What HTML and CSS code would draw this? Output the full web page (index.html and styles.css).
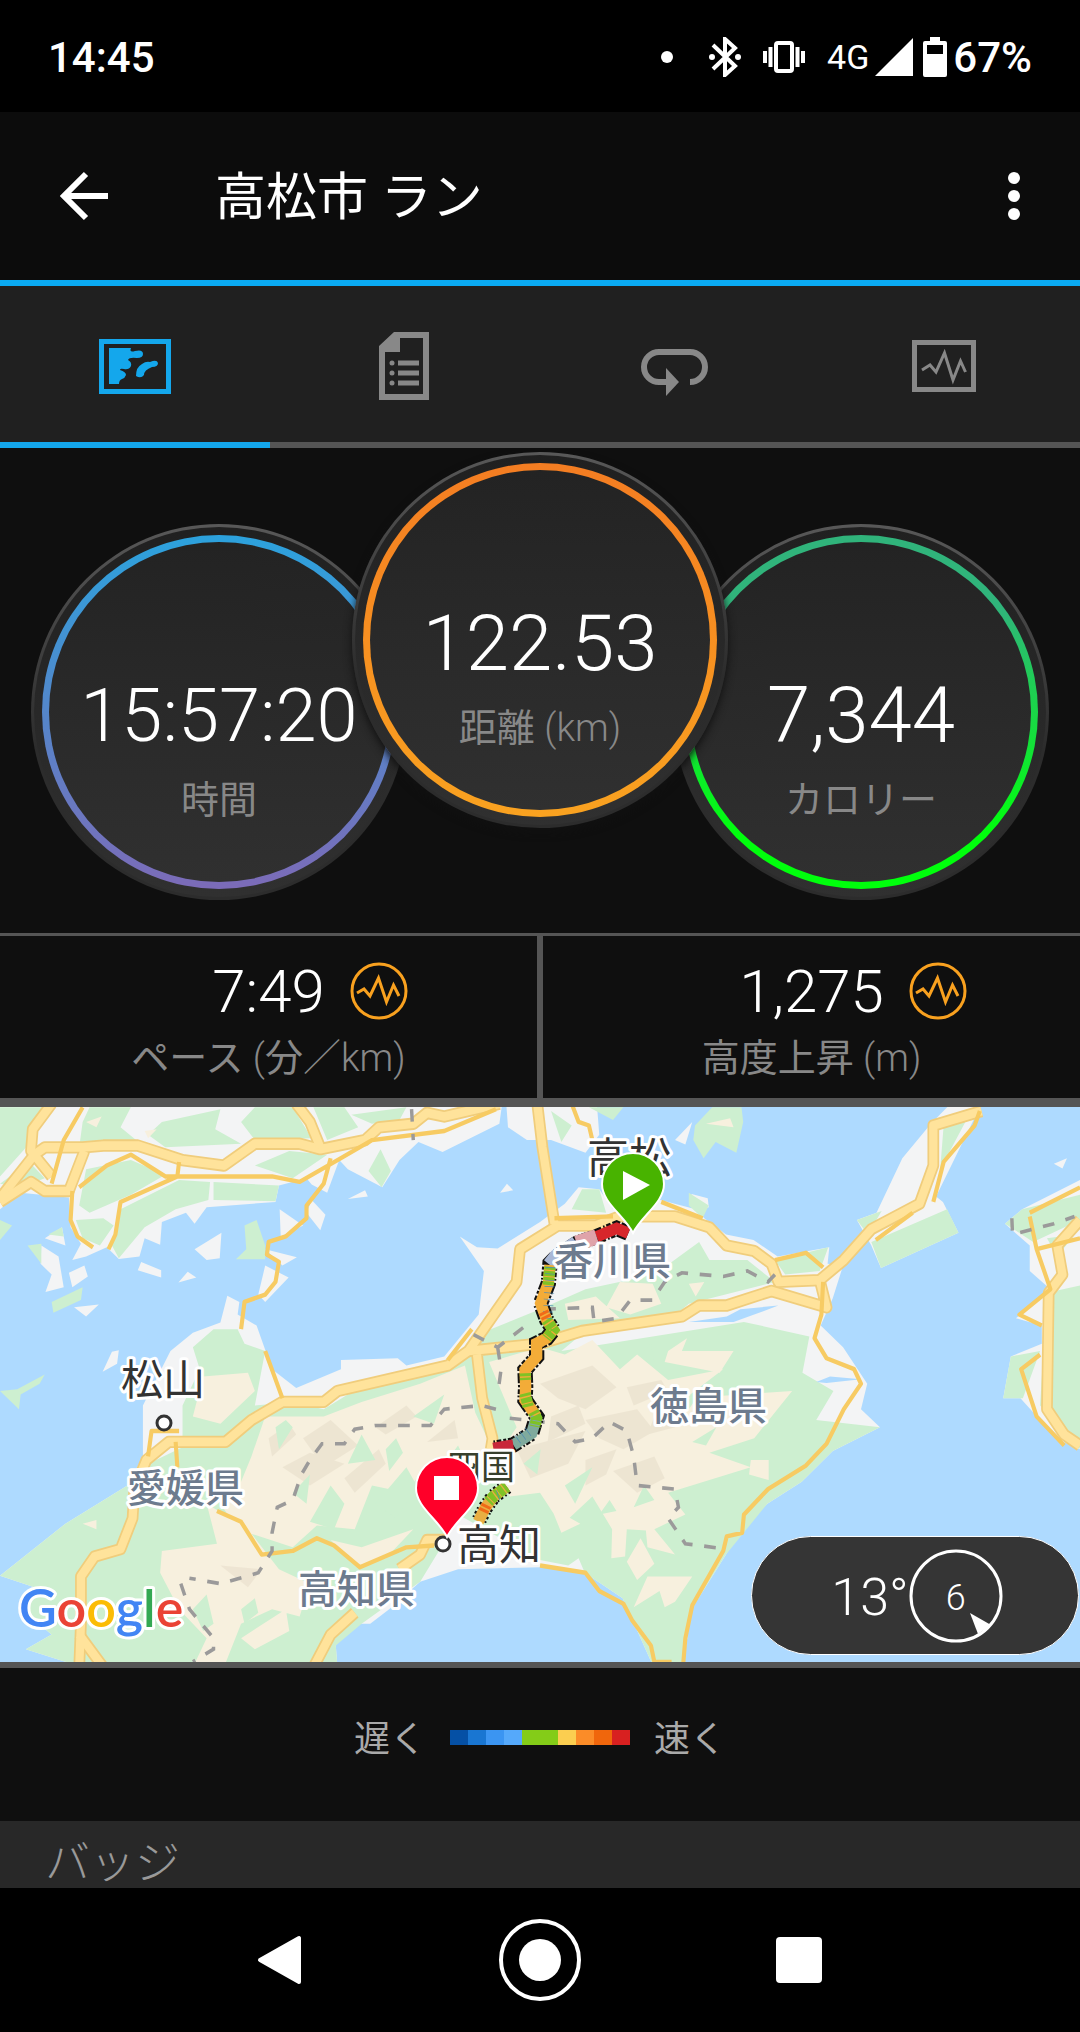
FILE: index.html
```html
<!DOCTYPE html>
<html lang="ja">

<head>
  <meta charset="UTF-8" />
  <meta name="viewport" content="width=device-width, initial-scale=1" />
  <title>高松市 ラン</title>
  <link rel="stylesheet" href="styles.css">
</head>

<body>
  <div class="status-bar">
    <span class="clock">14:45</span>
    <div class="status-icons">
      <svg width="12" height="12" viewBox="0 0 12 12"><circle cx="6" cy="6" r="6" fill="#fff"/></svg>
      <svg class="bluetooth" width="32" height="40" viewBox="0 0 32 40">
        <path d="M4 8l22 21-10 9V2l10 9L4 32" fill="none" stroke="#fff" stroke-width="4"/>
        <circle cx="3" cy="20" r="3" fill="#fff"/><circle cx="29" cy="20" r="3" fill="#fff"/>
      </svg>
      <svg class="vibrate" width="42" height="32" viewBox="0 0 42 32">
        <rect x="13" y="2" width="16" height="28" rx="2" fill="none" stroke="#fff" stroke-width="4"/>
        <path d="M2 10v12M7.500 6v20M34.500 6v20M40 10v12" stroke="#fff" stroke-width="4"/>
      </svg>
      <span class="network">4G</span>
      <svg width="38" height="38" viewBox="0 0 38 38"><path d="M38 0v38H0z" fill="#fff"/></svg>
      <svg class="battery" width="24" height="40" viewBox="0 0 24 40">
        <path fill-rule="evenodd" d="M7 0h10v4h5q2 0 2 2v32q0 2-2 2H2q-2 0-2-2V6q0-2 2-2h5zM4 8v9h16V8z" fill="#fff"/>
      </svg>
      <span class="percent">67%</span>
    </div>
  </div>

  <header class="app-bar">
    <button class="icon-button" aria-label="戻る">
      <svg width="48" height="50" viewBox="0 0 48 50"><path d="M26 3L4 25l22 22M4 25h44" fill="none" stroke="#fff" stroke-width="6"/></svg>
    </button>
    <h1>高松市 ラン</h1>
    <button class="icon-button" aria-label="メニュー">
      <svg width="12" height="50" viewBox="0 0 12 50" fill="#fff"><circle cx="6" cy="7" r="6"/><circle cx="6" cy="25" r="6"/><circle cx="6" cy="43" r="6"/></svg>
    </button>
  </header>

  <nav class="tabs">
    <button class="tab active" aria-label="マップ">
      <svg width="80" height="80" viewBox="0 0 80 80">
        <rect x="6.500" y="17.500" width="67" height="50" fill="none" stroke="currentColor" stroke-width="5"/>
        <path d="M14 24H36Q34 29 40 27Q48 25 48 30Q48 34 42 34Q34 33 33 36Q37 38 36 42Q34 46 29 45Q25 44 25 46Q31 48 31 51Q30 54 27 55Q24 56 24 60H14Z" fill="currentColor"/>
        <path d="M41 52Q41 43 47 40Q51 37 55 38Q62 35 63 39Q63 43 57 43Q49 46 49 51Q46 55 41 52Z" fill="currentColor"/>
      </svg>
    </button>
    <button class="tab" aria-label="詳細">
      <svg width="80" height="80" viewBox="0 0 80 80" fill="currentColor">
        <path fill-rule="evenodd" d="M29 8H64V76H14V22ZM35 14V28H20V70H58V14Z"/>
        <circle cx="27" cy="39" r="2.500"/><circle cx="27" cy="49" r="2.500"/><circle cx="27" cy="59" r="2.500"/>
        <path d="M33 36.500h21v5H33zM33 46.500h21v5H33zM33 56.500h21v5H33z"/>
      </svg>
    </button>
    <button class="tab" aria-label="ラップ">
      <svg width="80" height="80" viewBox="0 0 80 80">
        <path d="M33 58H24A15 15 0 0 1 24 28H55A15 15 0 0 1 55 58" fill="none" stroke="currentColor" stroke-width="6"/>
        <path d="M31 44L44 58 31 72Z" fill="currentColor"/>
      </svg>
    </button>
    <button class="tab" aria-label="チャート">
      <svg width="80" height="80" viewBox="0 0 80 80" fill="none" stroke="currentColor">
        <rect x="9.500" y="18.500" width="59" height="47" stroke-width="5"/>
        <path d="M17 46L25 41 31 48 39.500 29 48 56 55.500 37 60.500 48" stroke-width="3"/>
      </svg>
    </button>
  </nav>

  <main>
    <section class="gauges">
      <div class="gauge time">
        <div class="ring">
          <span class="value">15:57:20</span>
          <span class="label">時間</span>
        </div>
      </div>
      <div class="gauge distance">
        <div class="ring">
          <span class="value">122.53</span>
          <span class="label">距離 <span class="unit">(km)</span></span>
        </div>
      </div>
      <div class="gauge calories">
        <div class="ring">
          <span class="value">7,344</span>
          <span class="label">カロリー</span>
        </div>
      </div>
    </section>

    <section class="stats">
      <div class="stat">
        <div class="stat-row">
          <span class="stat-value">7:49</span>
          <button class="chart-button" aria-label="ペースのチャート">
            <svg width="60" height="60" viewBox="0 0 60 60" fill="none" stroke="#f9a11f" stroke-width="3">
              <circle cx="30" cy="30" r="27"/><path d="M8 32L15 28 21 35 29.500 17 37.500 41 44.500 24 50 35"/>
            </svg>
          </button>
        </div>
        <span class="label">ペース <span class="unit">(</span>分<span class="unit">／km)</span></span>
      </div>
      <div class="stat">
        <div class="stat-row">
          <span class="stat-value">1,275</span>
          <button class="chart-button" aria-label="高度のチャート">
            <svg width="60" height="60" viewBox="0 0 60 60" fill="none" stroke="#f9a11f" stroke-width="3">
              <circle cx="30" cy="30" r="27"/><path d="M8 32L15 28 21 35 29.500 17 37.500 41 44.500 24 50 35"/>
            </svg>
          </button>
        </div>
        <span class="label">高度上昇 <span class="unit">(m)</span></span>
      </div>
    </section>

    <section class="map">
      <svg class="map-canvas" viewBox="0 0 1080 555" preserveAspectRatio="xMidYMid slice">
        <g transform="scale(.3444 .3636) translate(0 -19)">
          <!-- land -->
          <g fill="#f3f4f5">
            <path d="M0 10H1458L1450 65 1285 143 1215 115 1160 165 1110 240 1010 190 985 165 950 255 905 232 890 215 810 235 800 280 600 295 565 340 540 310 470 335 465 398 420 380 405 430 345 437 310 405 250 430 210 440 235 395 205 350 200 268 60 255 0 300Z"/>
            <path d="M1470 10L1475 75 1530 110 1600 110 1700 145 1740 95 1733 10Z"/>
            <path d="M0 1308L190 1165 370 1060 415 980 415 840 495 690 560 640 640 612 660 538 695 555 690 590 745 620 790 740 860 792 990 740 990 715 1155 710 1180 730 1290 705 1390 590 1405 470 1335 375 1385 405 1445 408 1568 335 1640 285 1680 240 1740 245 1780 300 1918 275 2020 300 2045 325 2108 370 2188 385 2258 430 2408 405 2403 450 2448 455 2418 545 2383 620 2448 680 2518 780 2500 850 2555 900 2418 965 2328 1050 2228 1110 2158 1170 2108 1250 2008 1400 1983 1560H1898L1808 1370 1698 1300 1568 1285 1330 1290 1220 1325 1130 1400 1075 1440 1010 1440 975 1500 980 1560H240L75 1510 150 1470 60 1400 100 1340Z"/>
            <path d="M2703 65L2620 160 2545 310 2488 330 2530 400 2558 462 2783 365 2738 280 2718 265 2850 10H2760Z"/>
            <path d="M2918 340L2968 300 3136 220V960L3088 940 3020 880 2963 820 2913 820 2935 705 3025 670 3025 620 2950 600 3050 520 2990 470 2990 400Z"/>
            <path d="M812 300L880 345 815 375ZM905 275L945 315 930 358 890 310ZM565 410L643 365 638 435 600 440ZM410 445L468 468 468 488 400 468ZM545 472L570 488 518 502ZM770 410L862 432 820 455ZM770 455L838 488 770 555 750 535ZM120 400L170 430 185 515 132 528 150 480 118 450ZM200 475L245 455 255 485 210 515ZM215 570L287 562 250 595ZM130 380L180 350 190 400ZM325 692L345 688 340 725 298 747ZM1010 272L1060 248 1068 265ZM1472 230L1490 248 1452 255ZM1960 110L2010 60 1990 122ZM3060 175L3098 160 3085 188ZM2008 258L2055 270 2058 295 2010 310Z"/>
          </g>
          <!-- low ground -->
          <g fill="#cdefd0">
            <path d="M0 20H130L95 110 0 210ZM260 20H380L350 75 395 110 300 110 230 130 240 60ZM470 60L640 25 625 80 700 120 480 130 430 95ZM740 20H850L905 105 740 110 700 60ZM910 20H1000L1040 75 950 110ZM0 230L85 170 130 215 60 240ZM250 190L380 165 480 205 380 260 260 310 230 290ZM350 300L520 220 610 225 605 275 510 300 420 350 345 435 325 400ZM220 330L300 325 330 345 290 400 240 380ZM620 225L810 235 800 278 620 275ZM740 180L840 140 950 150 850 215ZM1105 135L1135 195 1108 240 1070 195ZM1020 40L1180 20 1160 55 1080 65ZM710 345L745 330 770 400 770 438H685L715 410ZM80 400L120 395 120 450ZM150 555L240 515 235 550 155 585ZM0 330L35 345 0 385ZM0 800L50 795 130 755 115 780 60 810 55 850ZM140 370L180 350 185 375Z"/>
            <path d="M0 1308L190 1165 370 1060 430 1000 530 955 530 840 580 740 560 680 620 630 690 630 710 670 770 690 740 840 850 830 940 850 1010 810 1300 730 1370 700 1400 640 1568 575 1700 520 1900 480 2030 390 2060 440 2170 440 2250 500 2000 560 1950 600 1700 635 1630 690 2160 610 2350 650 2330 750 2420 800 2370 880 2555 900 2418 965 2328 1050 2228 1110 2108 1250 2008 1400 1983 1560H1898L1808 1370 1698 1300 1680 1260 1650 1280 1568 1265 1330 1140 1300 1200 1220 1325 1050 1440 975 1500 980 1560H240L75 1510 150 1470 60 1400 100 1340Z"/>
            <path d="M2018 70L2068 20H2153L2158 60 2138 145 2078 115 2043 160 2013 110ZM1600 30L1660 70 1630 115ZM1710 20H1810L1780 55ZM1660 300L1690 245 1740 245 1760 310ZM2740 70L2820 30 2730 190ZM2530 390L2750 300 2783 365 2558 462ZM2488 330L2560 305 2520 370ZM2250 440L2340 420 2405 405 2380 470 2280 480ZM2918 340L2968 300 3136 260V330L3000 390ZM3040 530L3136 510V960L3020 840ZM2935 705L3020 690 2970 820 2913 820ZM2000 255L2058 290 2040 325 2000 290ZM3040 380L3120 370 3070 430Z"/>
          </g>
          <!-- mountains -->
          <g fill="#f7f0de">
            <path d="M590 760L720 750 740 800 640 890 560 870ZM770 870L940 870 1050 830 1220 780 1350 730 1380 860 1430 960 1340 1040 1240 1000 1180 1080 1080 1060 1030 1180 920 1170 850 1230 690 1180 640 1110 700 1050 730 980ZM600 1110L720 1180 810 1290 900 1330 870 1420 790 1400 700 1440 650 1560H560L600 1480 520 1400 465 1300 470 1240 630 1220ZM700 1480L830 1400 840 1460 740 1510ZM960 1210L1050 1230 1200 1180 1120 1260 1040 1280Z"/>
            <path d="M1420 720L1568 680 1640 700 1720 660 1800 740 1850 700 1940 770 2100 740 1990 820 2300 800 2190 930 2060 970 2180 1010 1940 1080 1990 1140 1900 1180 1960 1250 1880 1230 1870 1130 1790 1200 1720 1090 1630 1170 1568 1080 1480 1090 1430 1000 1500 900ZM1940 690L1995 655 1980 690 2130 690 2090 750 1930 720ZM2180 990H2232V1045L2175 1030ZM1600 1120L1685 1165 1630 1190ZM1780 1090H1900V1185L1820 1180 1815 1255 1775 1260ZM1820 1270L1860 1205 1900 1275 1850 1320ZM1880 1310L2010 1310 1960 1380 1930 1395 1915 1350 1840 1395ZM1800 500L1895 505 1920 560 1830 590 1760 570ZM1640 560L1730 540 1800 600 1650 605ZM2000 505L2045 500 2020 540Z"/>
            <path d="M250 60L295 45 280 75ZM420 85L455 80 430 105ZM2050 65L2120 50 2130 75ZM240 1165L280 1155 280 1180Z"/>
          </g>
          <!-- relief shading -->
          <g fill="#d9ceb9" opacity=".3">
            <path d="M880 930L960 880 1040 950 940 1010ZM820 1010L900 970 1000 1000 900 1060ZM1090 900L1180 840 1210 870 1120 920ZM1568 780L1720 730 1790 790 1700 850 1620 820ZM1700 880L1850 850 1900 910 1810 960 1740 930ZM1500 960L1700 910 1650 1000 1540 1040ZM1780 1020L1900 980 1930 1040 1850 1080ZM640 1280L760 1290 720 1340ZM1240 940L1320 880 1330 930Z"/>
            <path d="M780 930L840 890 860 920 790 980ZM1000 1040L1100 960 1120 1000 1030 1080ZM1600 870L1680 840 1700 890 1590 940ZM1900 870L2000 850 1960 900 1880 920ZM1820 790L1920 770 1940 800 1840 840ZM1700 990L1790 960 1760 1030 1700 1060Z"/>
          </g>
          <g fill="#cdefd0">
            <path d="M900 1160L960 1060 1000 1110 970 1180ZM1090 1110L1180 1010 1210 1060 1150 1150ZM1010 1000L1050 920 1090 990ZM850 1080L900 1030 890 1110ZM1200 870L1290 810 1260 890ZM1840 1120L1870 1060 1900 1100ZM1640 1060L1720 1010 1670 1110ZM2010 940L2080 900 2050 950ZM1250 1080L1330 1020 1300 1100Z"/>
            <path d="M800 900L830 880 850 900 810 960ZM1120 960L1150 930 1170 970 1130 1020ZM1290 1000L1330 950 1350 990ZM560 1400L600 1360 620 1440 590 1460ZM700 1400L740 1370 750 1410 710 1440ZM1860 700L1890 670 1900 720ZM1950 840L2030 810 2000 850ZM1740 1140L1770 1100 1790 1130ZM1520 1000L1570 960 1560 1030Z"/>
          </g>
          <path d="M2000 610L2110 595 2150 575 2260 565 2190 590 2130 610ZM2370 775L2410 760 2500 768 2400 778Z" fill="#aedaff"/>

          <!-- main roads, casing under fill -->
          <g class="roads casing">
            <path d="M0 270L100 150 130 130 240 130 300 125 400 125 530 165 650 180 740 120 870 120 930 135 1060 110 1100 75 1200 65 1240 35 1290 45 1450 10"/>
            <path d="M150 10L95 80 90 140 150 210M245 140L200 250 130 250 90 225 0 280M860 10L900 60 930 130"/>
            <path d="M230 1560L235 1440 235 1310 275 1255 350 1235 385 1150 390 1070 425 990 490 940 655 940 730 880 820 830 940 830 980 800 1300 730 1360 690 1500 500 1510 410 1620 345 1730 345 1800 320 1960 320 2060 350 2110 400 2190 415 2240 450 2260 500 2380 495 2450 440 2530 355 2670 285 2710 180 2710 70 2850 30"/>
            <path d="M1360 690L1568 670 1690 635 1980 595 2030 565 2110 565 2240 525 2400 570 2380 495M1385 700L1400 820 1430 930 1425 960M1560 10L1575 130 1610 340"/>
            <path d="M230 1470L300 1560M910 1560L960 1470 1030 1410M1160 1290L1220 1250 1240 1210 1300 1210"/>
            <path d="M3136 330L3070 400 3085 480 3045 530 3040 850 3090 920 3136 950"/>
          </g>
          <g class="roads">
            <path d="M0 270L100 150 130 130 240 130 300 125 400 125 530 165 650 180 740 120 870 120 930 135 1060 110 1100 75 1200 65 1240 35 1290 45 1450 10"/>
            <path d="M150 10L95 80 90 140 150 210M245 140L200 250 130 250 90 225 0 280M860 10L900 60 930 130"/>
            <path d="M230 1560L235 1440 235 1310 275 1255 350 1235 385 1150 390 1070 425 990 490 940 655 940 730 880 820 830 940 830 980 800 1300 730 1360 690 1500 500 1510 410 1620 345 1730 345 1800 320 1960 320 2060 350 2110 400 2190 415 2240 450 2260 500 2380 495 2450 440 2530 355 2670 285 2710 180 2710 70 2850 30"/>
            <path d="M1360 690L1568 670 1690 635 1980 595 2030 565 2110 565 2240 525 2400 570 2380 495M1385 700L1400 820 1430 930 1425 960M1560 10L1575 130 1610 340"/>
            <path d="M230 1470L300 1560M910 1560L960 1470 1030 1410M1160 1290L1220 1250 1240 1210 1300 1210"/>
            <path d="M3136 330L3070 400 3085 480 3045 530 3040 850 3090 920 3136 950"/>
          </g>
          <!-- minor roads -->
          <g class="minor-roads">
            <path d="M240 20L185 110 150 230M230 240L310 180 380 150 480 210 790 210 870 225 980 165 1080 110 1290 85 1440 25M210 250L205 330 225 375 270 405M520 170L515 210 350 280 335 370 315 410M960 160L940 230 890 290 890 325 830 375 780 390 775 425 810 445 800 500 770 535 710 555 700 630M770 690L820 820M510 940L515 1010M430 980L440 910 520 910M1300 715L1370 630"/>
            <path d="M630 1130L700 1160 760 1250 850 1240 920 1205 970 1225 1045 1285 1180 1230 1260 1225M1568 1280L1700 1300 1740 1350 1810 1385 1835 1430 1890 1500 1900 1545 1950 1545M1983 1560L1990 1480 2010 1390 2100 1240 2110 1200 2155 1190 2160 1140 2230 1070 2340 1005 2400 945 2450 850 2500 780 2480 740 2400 710 2365 655 2385 590 2390 500M2390 460L2340 420 2250 440M1920 280L2040 325M1610 325L1780 320M1660 10L1680 60 1710 70 1720 110M2543 385L2650 310M2710 280L2740 170 2830 70 2845 30M2990 310L3136 240M3136 380L3010 410 2990 320M3010 410L3050 520 2960 590 3025 620M3020 700L2965 740 3010 870 3090 950"/>
          </g>
          <!-- prefecture borders -->
          <g class="borders">
            <path d="M1195 25L1200 110M1375 645L1445 680 1520 625M1445 680L1455 740 1445 810M1440 850L1400 840 1290 850 1250 895 1090 895 1030 905 1000 945 935 945 900 990 875 1030 850 1100 805 1120 790 1190 790 1240 750 1300 640 1330 550 1315M525 1330L550 1400 620 1480 620 1510 560 1545"/>
            <path d="M1580 575L1720 570 1725 610 1790 600 1830 550 1895 550 1930 500 1980 475 2100 485 2170 470 2230 500 2250 480M1480 875L1620 890 1670 940 1720 930 1770 885 1820 910 1840 980 1850 1060 1960 1070 1970 1120 1940 1150 1990 1220 2110 1235M2938 325L2940 370 3060 340 3120 320"/>
          </g>
        </g>

        <!-- recorded track, coloured by pace -->
        <g transform="translate(430 73) scale(.3333)" fill="none">
          <path d="M595 160L560 145 500 170 440 190 380 230 360 250 355 310 332 370 350 420 370 450 350 475 320 490 320 530 285 570 287 620 285 660 320 710 305 760 250 795 190 805" stroke="#111" stroke-width="46" stroke-dasharray="30 5 9 6 14 5 5 7"/>
          <path d="M230 920L190 950 165 985 145 1025" stroke="#111" stroke-width="46" stroke-dasharray="8 7 5 8"/>
          <path d="M595 160L560 145 500 170" stroke="#d7262b" stroke-width="34"/>
          <path d="M500 170L440 190" stroke="#dfa3aa" stroke-width="46"/>
          <path d="M440 190L380 230 360 255" stroke="#a9b8d6" stroke-width="46"/>
          <path d="M360 255L355 310 332 370 350 420 370 450 350 475 320 490 320 530 285 570 287 620 285 660 320 710" stroke="#f3ac38" stroke-width="34"/>
          <path d="M320 710L305 760 250 795" stroke="#7faa9d" stroke-width="34"/>
          <path d="M250 795L190 805" stroke="#c8283a" stroke-width="34"/>
          <path d="M230 920L190 950 165 985 145 1025" stroke="#e8ae42" stroke-width="34"/>
          <path d="M360 260L355 315M350 420L370 450 350 475M286 580L287 600M285 640L295 680M310 695L320 715 315 740M230 920L190 950 175 965" stroke="#7fc225" stroke-width="34" stroke-dasharray="9 4 16 3"/>
          <path d="M362 262L352 430M295 755L260 780M205 945L190 950" stroke="#4c8bb5" stroke-width="30" stroke-dasharray="2 17"/>
          <path d="M340 395L350 415M170 975L158 1000" stroke="#f06a18" stroke-width="30" stroke-dasharray="9 5"/>
        </g>

        <g class="place-marker"><circle cx="164" cy="316" r="7"/><circle cx="443" cy="437" r="7"/></g>
        <g class="city">
          <text x="121" y="288">松山</text>
          <text x="587" y="66">高松</text>
          <text x="457" y="453">高知</text>
          <text class="region" x="447" y="372">四国</text>
        </g>
        <g class="prefecture">
          <text x="127" y="395">愛媛県</text>
          <text x="298" y="496">高知県</text>
          <text x="554" y="168">香川県</text>
          <text x="650" y="313">徳島県</text>
        </g>

        <g transform="translate(633 126)">
          <path d="M0 0C-9-18-31-30-31-49A31 31 0 0 1 31-49C31-30 9-18 0 0Z" fill="#48b300" stroke="#fff" stroke-width="2"/>
          <path d="M-10-62V-33L17-48Z" fill="#fff"/>
        </g>
        <g transform="translate(447 430)">
          <path d="M0 0C-9-18-31-30-31-49A31 31 0 0 1 31-49C31-30 9-18 0 0Z" fill="#ff0029" stroke="#fff" stroke-width="2"/>
          <path d="M-13-61H12V-37H-13Z" fill="#fff"/>
        </g>

        <text class="google" x="19" y="520"><tspan fill="#4285f4">G</tspan><tspan fill="#ea4335">o</tspan><tspan fill="#fbbc05">o</tspan><tspan fill="#4285f4">g</tspan><tspan fill="#34a853">l</tspan><tspan fill="#ea4335">e</tspan></text>
      </svg>

      <div class="weather">
        <span class="temperature">13°</span>
        <div class="wind">
          <svg width="94" height="94" viewBox="0 0 94 94">
            <circle cx="47" cy="47" r="45" fill="none" stroke="#fff" stroke-width="3"/>
            <path d="M61 64L82 76 69 85Z" fill="#fff"/>
          </svg>
          <span class="wind-speed">6</span>
        </div>
      </div>
    </section>

    <section class="legend">
      <span>遅く</span>
      <div class="scale">
        <i class="pace-1"></i><i class="pace-2"></i><i class="pace-3"></i><i class="pace-4"></i><i class="pace-5"></i><i class="pace-5"></i><i class="pace-6"></i><i class="pace-7"></i><i class="pace-8"></i><i class="pace-9"></i>
      </div>
      <span>速く</span>
    </section>

    <h2 class="section-title">バッジ</h2>
  </main>

  <nav class="system-nav">
    <button aria-label="戻る">
      <svg width="84" height="84" viewBox="0 0 84 84"><path d="M22 42L61 20V64Z" fill="#fff" stroke="#fff" stroke-width="4" stroke-linejoin="round"/></svg>
    </button>
    <button aria-label="ホーム">
      <svg width="84" height="84" viewBox="0 0 84 84"><circle cx="42" cy="42" r="39" fill="none" stroke="#fff" stroke-width="4"/><circle cx="42" cy="42" r="21" fill="#fff"/></svg>
    </button>
    <button aria-label="履歴">
      <svg width="84" height="84" viewBox="0 0 84 84"><rect x="18" y="19" width="46" height="46" rx="4" fill="#fff"/></svg>
    </button>
  </nav>
</body>

</html>
```
FILE: styles.css
```css
* {
  box-sizing: border-box;
}

body {
  margin: 0;
  background: #000;
  color: #fff;
  font-family: Roboto, "Noto Sans CJK JP", sans-serif;
}

button {
  padding: 0;
  border: 0;
  background: none;
  color: inherit;
  font: inherit;
}

svg {
  display: block;
}

/* status bar */
.status-bar {
  display: flex;
  align-items: center;
  justify-content: space-between;
  height: 112px;
  padding: 2px 48px 0;
  font-size: 42px;
  font-weight: 500;
}

.status-icons {
  display: flex;
  align-items: center;
  gap: 6px;
}

.bluetooth {
  margin-left: 30px;
}

.vibrate {
  margin: 0 16px;
}

.network {
  font-size: 34px;
  font-weight: 400;
}

.battery {
  margin-left: 4px;
}

/* app bar */
.app-bar {
  display: flex;
  align-items: center;
  height: 174px;
  padding: 0 60px;
  background: #0c0c0c;
  border-bottom: 6px solid #0aaaf2;
}

.app-bar h1 {
  flex: 1;
  margin: 0 0 6px 107px;
  font-size: 51px;
  font-weight: 400;
}

/* tabs */
.tabs {
  display: flex;
  background: #202020;
}

.tab {
  flex: 1;
  display: flex;
  align-items: center;
  justify-content: center;
  height: 162px;
  border-bottom: 6px solid #555;
  color: #888;
}

.tab.active {
  color: #14a7ec;
  border-color: #14a7ec;
}

main {
  background: #0f0f0f;
}

/* gauges */
.gauges {
  display: flex;
  align-items: flex-start;
  justify-content: center;
  padding: 4px 0 33px;
}

.gauge {
  width: 376px;
  height: 376px;
  padding: 8px;
  border: 3px solid transparent;
  border-radius: 50%;
  background:
    linear-gradient(#202020, #303030) padding-box,
    linear-gradient(#585858, #2c2c2c 60%) border-box;
}

.gauge.time,
.gauge.calories {
  margin-top: 72px;
}

.gauge.distance {
  position: relative;
  margin: 0 -55px;
  box-shadow: 0 4px 8px #111;
}

.ring {
  display: flex;
  flex-direction: column;
  align-items: center;
  height: 100%;
  padding-top: 128px;
  border: 7px solid transparent;
  border-radius: 50%;
}

.time .ring {
  background:
    linear-gradient(#232323, #303030) padding-box,
    linear-gradient(#2ca2dd, #7c6bb8) border-box;
}

.distance .ring {
  background:
    linear-gradient(#232323, #303030) padding-box,
    linear-gradient(#f47d22, #f9a220) border-box;
}

.calories .ring {
  background:
    linear-gradient(#232323, #303030) padding-box,
    linear-gradient(#30b47b 20%, #00ff0c 85%) border-box;
}

.value {
  margin-bottom: 10px;
  font-size: 78px;
  font-weight: 300;
  line-height: 92px;
}

.time .value {
  font-size: 74px;
}

.label {
  color: #888;
  font-size: 38px;
  line-height: 56px;
}

.unit {
  font-weight: 300;
}

/* stats */
.stats {
  display: grid;
  grid-template-columns: 1fr 1fr;
  border-top: 3px solid #555;
  border-bottom: 9px solid #555;
}

.stat {
  display: flex;
  flex-direction: column;
  align-items: center;
  height: 162px;
  padding-top: 20px;
  border-left: 3px solid #555;
}

.stat:first-child {
  border-left: 0;
  border-right: 3px solid #555;
}

.stat .label {
  padding-top: 4px;
}

.stat-row {
  display: grid;
  grid-template-columns: 1fr auto 1fr;
  align-items: center;
  column-gap: 24px;
  width: 100%;
}

.stat-value {
  grid-column: 2;
  padding-top: 2px;
  font-size: 60px;
  font-weight: 300;
  line-height: 68px;
}

.chart-button {
  justify-self: start;
}

/* map */
.map {
  position: relative;
  border-bottom: 6px solid #555;
  background: #aedaff;
}

.map-canvas {
  width: 100%;
  height: 555px;
}

.roads {
  fill: none;
  stroke: #ffe39b;
  stroke-width: 24;
  stroke-linejoin: round;
}

.roads.casing {
  stroke: #f0cd7c;
  stroke-width: 34;
}

.minor-roads {
  fill: none;
  stroke: #f7cb63;
  stroke-width: 12;
  stroke-linejoin: round;
}

.borders {
  fill: none;
  stroke: #9b9a9a;
  stroke-width: 10;
  stroke-dasharray: 34 34;
}

.map-canvas text {
  paint-order: stroke;
  stroke: #fff;
  stroke-width: 6px;
  stroke-linejoin: round;
}

.city text {
  fill: #333;
  font-size: 42px;
}

.city .region {
  fill: #37402d;
  font-size: 34px;
}

.prefecture text {
  fill: #6d7b8e;
  font-size: 39px;
  font-weight: 500;
}

.place-marker {
  fill: #fff;
  stroke: #333;
  stroke-width: 3px;
}

.map-canvas .google {
  font-family: Lato, sans-serif;
  font-size: 52px;
  font-weight: 600;
}

.weather {
  position: absolute;
  right: 1px;
  bottom: 7px;
  display: flex;
  align-items: center;
  justify-content: center;
  width: 328px;
  height: 119px;
  padding-left: 4px;
  border: 1px solid #fff;
  border-radius: 60px;
  background: #353535;
  font-weight: 300;
}

.temperature {
  padding-top: 4px;
  font-size: 52px;
}

.wind {
  display: grid;
  place-items: center;
}

.wind svg,
.wind-speed {
  grid-area: 1 / 1;
}

.wind-speed {
  padding-top: 4px;
  font-size: 36px;
}

/* pace legend */
.legend {
  display: flex;
  align-items: center;
  justify-content: center;
  gap: 24px;
  height: 153px;
  padding-bottom: 14px;
  color: #aaa;
  font-size: 36px;
}

.legend span {
  padding-bottom: 4px;
}

.scale {
  display: flex;
}

.scale i {
  width: 18px;
  height: 15px;
}

.pace-1 { background: #0550a5; }
.pace-2 { background: #1976d2; }
.pace-3 { background: #3b95f2; }
.pace-4 { background: #55a9fb; }
.pace-5 { background: #84cc18; }
.pace-6 { background: #fbce50; }
.pace-7 { background: #fb8c28; }
.pace-8 { background: #f0660c; }
.pace-9 { background: #d82020; }

.section-title {
  margin: 0;
  padding: 19px 45px 0;
  background: #282828;
  color: #999;
  font-size: 45px;
  font-weight: 300;
  line-height: 48px;
}

/* system navigation */
.system-nav {
  display: flex;
  align-items: center;
  justify-content: center;
  gap: 176px;
  height: 144px;
}
```
